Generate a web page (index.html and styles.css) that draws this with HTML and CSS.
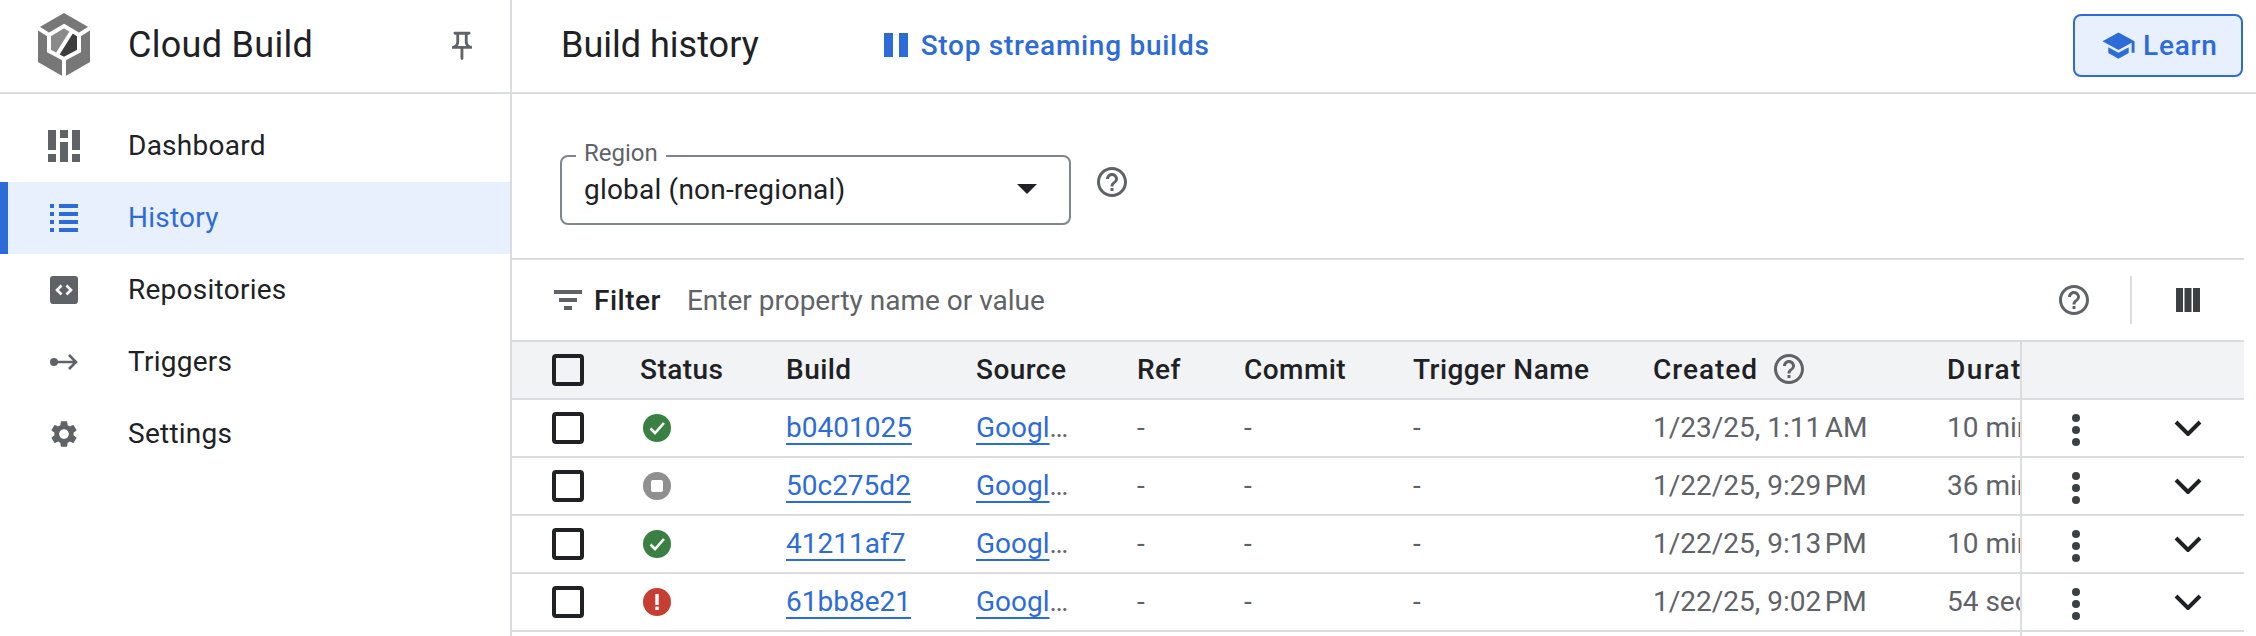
FILE: index.html
```html
<!DOCTYPE html>
<html lang="en">
<head>
  <meta charset="UTF-8" />
  <title>Build history - Cloud Build</title>
  <link rel="stylesheet" href="styles.css">
</head>
<body>

  <svg class="defs" width="0" height="0">
    <symbol id="help" viewBox="0 0 24 24">
      <path d="M11 18h2v-2h-2v2zm1-16C6.48 2 2 6.48 2 12s4.48 10 10 10 10-4.48 10-10S17.52 2 12 2zm0 18c-4.41 0-8-3.59-8-8s3.59-8 8-8 8 3.59 8 8-3.59 8-8 8zm0-14c-2.21 0-4 1.79-4 4h2c0-1.1.9-2 2-2s2 .9 2 2c0 2-3 1.75-3 5h2c0-2.25 3-2.5 3-5 0-2.21-1.79-4-4-4z"/>
    </symbol>
    <symbol id="ok" viewBox="0 0 28 28">
      <circle cx="14" cy="14" r="14" fill="#3b8043"/>
      <path d="M7.5 14.5l4.500 4.500 9-10" fill="none" stroke="#fff" stroke-width="2.6"/>
    </symbol>
    <symbol id="stopped" viewBox="0 0 28 28">
      <circle cx="14" cy="14" r="14" fill="#8f8f8f"/>
      <rect x="8" y="8" width="12" height="12" rx="2" fill="#fff"/>
    </symbol>
    <symbol id="failed" viewBox="0 0 28 28">
      <circle cx="14" cy="14" r="14" fill="#c63d32"/>
      <rect x="12.3" y="6" width="3.4" height="11" fill="#fff"/>
      <rect x="12.3" y="18.6" width="3.4" height="3.4" fill="#fff"/>
    </symbol>
    <symbol id="kebab" viewBox="0 0 8 32">
      <circle cx="4" cy="4" r="4"/>
      <circle cx="4" cy="16" r="4"/>
      <circle cx="4" cy="28" r="4"/>
    </symbol>
    <symbol id="chevron" viewBox="0 0 28 16">
      <path d="M2 2l12 12L26 2" fill="none" stroke="currentColor" stroke-width="4"/>
    </symbol>
  </svg>

  <div class="app">
    <aside class="sidebar">
      <div class="brand">
        <svg class="logo" viewBox="0 0 58 64" width="58" height="64">
          <path d="M29 0L55 15V49L29 64L3 49V15Z" fill="#777"/>
          <path d="M29 13L44 22V38L29 46L14 38V22Z" fill="#8a8a8a"/>
          <path d="M37 18L44 22V38L29 46L22 42Z" fill="#3d3d3d"/>
          <path d="M29 13L44 22V38L29 46L14 38V22ZM3 15L14 22M55 15L44 22M29 46V64M37 18L22 42" fill="none" stroke="#fff" stroke-width="4"/>
        </svg>
        <span class="brand-name">Cloud Build</span>
        <svg class="pin" viewBox="0 0 24 24" width="34" height="34">
          <path d="M14 4v5c0 1.12.37 2.16 1 3H9c.65-.86 1-1.9 1-3V4h4m3-2H7c-.55 0-1 .45-1 1s.45 1 1 1h1v5c0 1.66-1.34 3-3 3v2h5.97v7l1 1 1-1v-7H19v-2c-1.66 0-3-1.34-3-3V4h1c.55 0 1-.45 1-1s-.45-1-1-1z"/>
        </svg>
      </div>
      <nav class="nav">
        <a class="nav-item">
          <svg class="nav-icon" viewBox="0 0 32 32">
            <path d="M0 0h8v20H0zM0 24h8v8H0zM12 0h8v8h-8zM12 12h8v20h-8zM24 0h8v20h-8zM24 24h8v8h-8z"/>
          </svg>
          Dashboard
        </a>
        <a class="nav-item active">
          <svg class="nav-icon" viewBox="0 0 32 32">
            <path d="M2 2h4v4H2zM11 2h19v4H11zM2 10h4v4H2zM11 10h19v4H11zM2 18h4v4H2zM11 18h19v4H11zM2 26h4v4H2zM11 26h19v4H11z"/>
          </svg>
          History
        </a>
        <a class="nav-item">
          <svg class="nav-icon" viewBox="0 0 32 32">
            <rect x="2" y="2" width="28" height="28" rx="3"/>
            <path d="M13.500 11.500L9 16l4.500 4.500M18.500 11.500L23 16l-4.500 4.500" fill="none" stroke="#fff" stroke-width="2.6"/>
          </svg>
          Repositories
        </a>
        <a class="nav-item">
          <svg class="nav-icon" viewBox="0 0 32 32">
            <circle cx="6" cy="16" r="4"/>
            <path d="M6 16h22M21 9l7 7-7 7" fill="none" stroke="#5f6368" stroke-width="2.6"/>
          </svg>
          Triggers
        </a>
        <a class="nav-item">
          <svg class="nav-icon" viewBox="0 0 24 24">
            <path d="M19.14 12.94c.04-.3.06-.61.06-.94 0-.32-.02-.64-.07-.94l2.03-1.58c.18-.14.23-.41.12-.61l-1.92-3.32c-.12-.22-.37-.29-.59-.22l-2.39.96c-.5-.38-1.03-.7-1.62-.94l-.36-2.54c-.04-.24-.24-.41-.48-.41h-3.84c-.24 0-.43.17-.47.41l-.36 2.54c-.59.24-1.13.57-1.62.94l-2.39-.96c-.22-.08-.47 0-.59.22L2.74 8.87c-.12.21-.08.47.12.61l2.03 1.58c-.05.3-.09.63-.09.94s.02.64.07.94l-2.03 1.58c-.18.14-.23.41-.12.61l1.92 3.32c.12.22.37.29.59.22l2.39-.96c.5.38 1.03.7 1.62.94l.36 2.54c.05.24.24.41.48.41h3.84c.24 0 .44-.17.47-.41l.36-2.54c.59-.24 1.13-.56 1.62-.94l2.39.96c.22.08.47 0 .59-.22l1.92-3.32c.12-.22.07-.47-.12-.61l-2.01-1.58zM12 15.6c-1.98 0-3.6-1.62-3.6-3.6s1.62-3.6 3.6-3.6 3.6 1.62 3.6 3.6-1.62 3.6-3.6 3.6z"/>
          </svg>
          Settings
        </a>
      </nav>
    </aside>

    <main class="main">
      <header class="topbar">
        <h1 class="page-title">Build history</h1>
        <a class="stream-link">
          <svg class="pause" viewBox="0 0 24 24" width="24" height="24">
            <path d="M0 0h9v24H0zM15 0h9v24h-9z"/>
          </svg>
          Stop streaming builds
        </a>
        <button class="learn-btn">
          <svg viewBox="0 0 24 24" width="35" height="35">
            <path d="M5 13.18v4L12 21l7-3.82v-4L12 17l-7-3.82zM12 3L1 9l11 6 9-4.91V17h2V9L12 3z"/>
          </svg>
          Learn
        </button>
      </header>

      <div class="content">
        <section class="region-row">
          <div class="region-select">
            <span class="region-label">Region</span>
            <span class="region-value">global (non-regional)</span>
            <span class="caret"></span>
          </div>
          <svg class="help region-help"><use href="#help"/></svg>
        </section>

        <section class="filter-bar">
          <svg class="filter-icon" viewBox="0 0 28 20" width="28" height="20">
            <path d="M0 0h28v4H0zM5 8h18v4H5zM10 16h8v4h-8z"/>
          </svg>
          <span class="filter-label">Filter</span>
          <span class="filter-hint">Enter property name or value</span>
          <svg class="help filter-help"><use href="#help"/></svg>
          <span class="filter-divider"></span>
          <svg class="columns-icon" viewBox="0 0 24 24" width="24" height="24">
            <path d="M0 0h7v24H0zM8.500 0h7v24h-7zM17 0h7v24h-7z"/>
          </svg>
        </section>

        <table class="builds">
          <colgroup>
            <col class="c-check"><col class="c-status"><col class="c-build"><col class="c-source">
            <col class="c-ref"><col class="c-commit"><col class="c-trigger"><col class="c-created">
            <col class="c-duration"><col class="c-menu"><col class="c-expand">
          </colgroup>
          <thead>
            <tr>
              <th class="check-cell"><span class="checkbox"></span></th>
              <th>Status</th>
              <th>Build</th>
              <th>Source</th>
              <th>Ref</th>
              <th>Commit</th>
              <th>Trigger Name</th>
              <th><span class="created-head">Created <svg class="help"><use href="#help"/></svg></span></th>
              <th class="duration-head">Duration</th>
              <th class="sticky-start"></th>
              <th></th>
            </tr>
          </thead>
          <tbody>
            <tr>
              <td class="check-cell"><span class="checkbox"></span></td>
              <td><svg class="status"><use href="#ok"/></svg></td>
              <td><a class="link">b0401025</a></td>
              <td><a class="link">Googl</a><span class="more">...</span></td>
              <td>-</td>
              <td>-</td>
              <td>-</td>
              <td>1/23/25, 1:11&#8239;AM</td>
              <td>10 min</td>
              <td class="sticky-start"><svg class="kebab"><use href="#kebab"/></svg></td>
              <td><svg class="chevron"><use href="#chevron"/></svg></td>
            </tr>
            <tr>
              <td class="check-cell"><span class="checkbox"></span></td>
              <td><svg class="status"><use href="#stopped"/></svg></td>
              <td><a class="link">50c275d2</a></td>
              <td><a class="link">Googl</a><span class="more">...</span></td>
              <td>-</td>
              <td>-</td>
              <td>-</td>
              <td>1/22/25, 9:29&#8239;PM</td>
              <td>36 min</td>
              <td class="sticky-start"><svg class="kebab"><use href="#kebab"/></svg></td>
              <td><svg class="chevron"><use href="#chevron"/></svg></td>
            </tr>
            <tr>
              <td class="check-cell"><span class="checkbox"></span></td>
              <td><svg class="status"><use href="#ok"/></svg></td>
              <td><a class="link">41211af7</a></td>
              <td><a class="link">Googl</a><span class="more">...</span></td>
              <td>-</td>
              <td>-</td>
              <td>-</td>
              <td>1/22/25, 9:13&#8239;PM</td>
              <td>10 min</td>
              <td class="sticky-start"><svg class="kebab"><use href="#kebab"/></svg></td>
              <td><svg class="chevron"><use href="#chevron"/></svg></td>
            </tr>
            <tr>
              <td class="check-cell"><span class="checkbox"></span></td>
              <td><svg class="status"><use href="#failed"/></svg></td>
              <td><a class="link">61bb8e21</a></td>
              <td><a class="link">Googl</a><span class="more">...</span></td>
              <td>-</td>
              <td>-</td>
              <td>-</td>
              <td>1/22/25, 9:02&#8239;PM</td>
              <td>54 sec</td>
              <td class="sticky-start"><svg class="kebab"><use href="#kebab"/></svg></td>
              <td><svg class="chevron"><use href="#chevron"/></svg></td>
            </tr>
            <tr class="tail">
              <td></td><td></td><td></td><td></td><td></td><td></td><td></td><td></td><td></td>
              <td class="sticky-start"></td><td></td>
            </tr>
          </tbody>
        </table>
      </div>
    </main>
  </div>

</body>
</html>
```

FILE: styles.css
```css
* {
  margin: 0;
  padding: 0;
  box-sizing: border-box;
}

html, body {
  height: 100%;
  overflow: hidden;
}

body {
  font-family: 'Roboto', 'Liberation Sans', sans-serif;
  font-size: 28px;
  color: #202124;
  background: #fff;
}

.defs {
  position: absolute;
}

.app {
  display: flex;
  height: 636px;
  overflow: hidden;
}

/* Left navigation */
.sidebar {
  width: 512px;
  flex-shrink: 0;
  border-right: 2px solid #dadce0;
}

.brand {
  display: flex;
  align-items: center;
  height: 94px;
  padding: 0 0 2px 35px;
  border-bottom: 2px solid #dadce0;
}

.logo {
  flex-shrink: 0;
}

.brand-name {
  margin-left: 35px;
  font-size: 36px;
  letter-spacing: 0.3px;
}

.pin {
  margin-left: auto;
  margin-right: 31px;
  margin-top: 2px;
  fill: #5f6368;
}

.nav {
  padding-top: 16px;
}

.nav-item {
  display: flex;
  align-items: center;
  height: 72px;
  padding-left: 48px;
  padding-bottom: 2px;
  letter-spacing: 0.25px;
}

.nav-icon {
  width: 32px;
  height: 32px;
  margin: 2px 48px 0 0;
  fill: #5f6368;
}

.nav-item.active {
  background: #e8f0fe;
  color: #2d6bd9;
  padding-left: 40px;
  border-left: 8px solid #2d6bd9;
}

.nav-item.active .nav-icon {
  fill: #2d6bd9;
}

/* Main column */
.main {
  flex: 1;
  min-width: 0;
}

.topbar {
  display: flex;
  align-items: center;
  height: 94px;
  padding: 0 13px 2px 49px;
  border-bottom: 2px solid #dadce0;
}

.page-title {
  font-size: 36px;
  font-weight: 400;
}

.stream-link {
  display: flex;
  align-items: center;
  margin-left: 125px;
  font-weight: 470;
  letter-spacing: 0.72px;
  color: #2d6bd9;
}

.pause {
  margin-right: 13px;
  fill: #2d6bd9;
}

.learn-btn {
  display: flex;
  align-items: center;
  gap: 7px;
  margin-left: auto;
  width: 170px;
  height: 63px;
  padding-left: 26px;
  font: 470 28px 'Roboto', sans-serif;
  letter-spacing: 0.8px;
  color: #2d6bd9;
  background: #e8f0fe;
  border: 2px solid #2d6bd9;
  border-radius: 8px;
}

.learn-btn svg {
  fill: #2d6bd9;
}

.content {
  margin-right: 12px;
}

.help {
  width: 36px;
  height: 36px;
  fill: #5f6368;
  flex-shrink: 0;
}

.region-row {
  display: flex;
  height: 166px;
  padding: 61px 0 0 48px;
  border-bottom: 2px solid #dadce0;
}

.region-select {
  position: relative;
  display: flex;
  align-items: center;
  justify-content: space-between;
  width: 511px;
  height: 70px;
  padding: 0 32px 2px 22px;
  border: 2px solid #80868b;
  border-radius: 8px;
}

.region-value {
  letter-spacing: 0.2px;
}

.region-label {
  position: absolute;
  top: -18px;
  left: 14px;
  padding: 0 8px;
  font-size: 24px;
  line-height: 28px;
  color: #5f6368;
  background: #fff;
}

.caret {
  width: 0;
  height: 0;
  border-left: 10px solid transparent;
  border-right: 10px solid transparent;
  border-top: 10px solid #202124;
}

.region-help {
  margin: 9px 0 0 23px;
}

.filter-bar {
  display: flex;
  align-items: center;
  height: 80px;
  padding: 0 44px 0 42px;
}

.filter-icon {
  fill: #5f6368;
  margin-right: 12px;
}

.filter-label {
  font-weight: 470;
  letter-spacing: 0.5px;
  margin-right: 26px;
}

.filter-hint {
  color: #5f6368;
}

.filter-help {
  margin-left: auto;
}

.filter-divider {
  width: 2px;
  height: 48px;
  margin: 0 44px 0 38px;
  background: #dadce0;
}

.columns-icon {
  fill: #3c4043;
}

/* Builds table */
.builds {
  width: 1732px;
  table-layout: fixed;
  border-collapse: separate;
  border-spacing: 0;
}

.c-check { width: 112px; }
.c-status { width: 146px; }
.c-build { width: 190px; }
.c-source { width: 161px; }
.c-ref { width: 107px; }
.c-commit { width: 169px; }
.c-trigger { width: 240px; }
.c-created { width: 294px; }
.c-duration { width: 89px; }
.c-menu { width: 110px; }
.c-expand { width: 114px; }

.builds th,
.builds td {
  height: 58px;
  padding: 0 0 2px 16px;
  text-align: left;
  white-space: nowrap;
  overflow: hidden;
  vertical-align: middle;
  border-bottom: 2px solid #dadce0;
}

.builds th {
  height: 60px;
  font-weight: 460;
  letter-spacing: 0.45px;
  background: #f1f3f4;
  border-top: 2px solid #dadce0;
}

.builds td {
  color: #5f6368;
}

.builds .tail td {
  height: 4px;
  padding: 0;
  border-bottom: none;
}

.builds .check-cell {
  padding: 0 0 0 40px;
  font-size: 0;
}

.builds .sticky-start {
  padding-left: 50px;
  border-left: 2px solid #dadce0;
}

.builds .duration-head {
  letter-spacing: 1.4px;
}

.checkbox {
  display: inline-block;
  width: 32px;
  height: 32px;
  vertical-align: middle;
  border: 4px solid #202124;
  border-radius: 4px;
}

.status {
  display: block;
  width: 28px;
  height: 28px;
  margin: 2px 0 0 3px;
}

.link {
  color: #2d6bd9;
  text-decoration: underline;
  text-decoration-thickness: 2px;
  text-decoration-skip-ink: none;
  text-underline-offset: 6px;
}

.more {
  color: #5f6368;
  letter-spacing: -1.5px;
}

.created-head {
  display: inline-flex;
  align-items: center;
  gap: 13px;
  letter-spacing: 1px;
}

.kebab {
  display: block;
  width: 8px;
  height: 32px;
  margin-top: 6px;
  fill: #3c4043;
}

.chevron {
  display: block;
  width: 28px;
  height: 16px;
  margin: 2px 0 0 28px;
  color: #202124;
}
```
